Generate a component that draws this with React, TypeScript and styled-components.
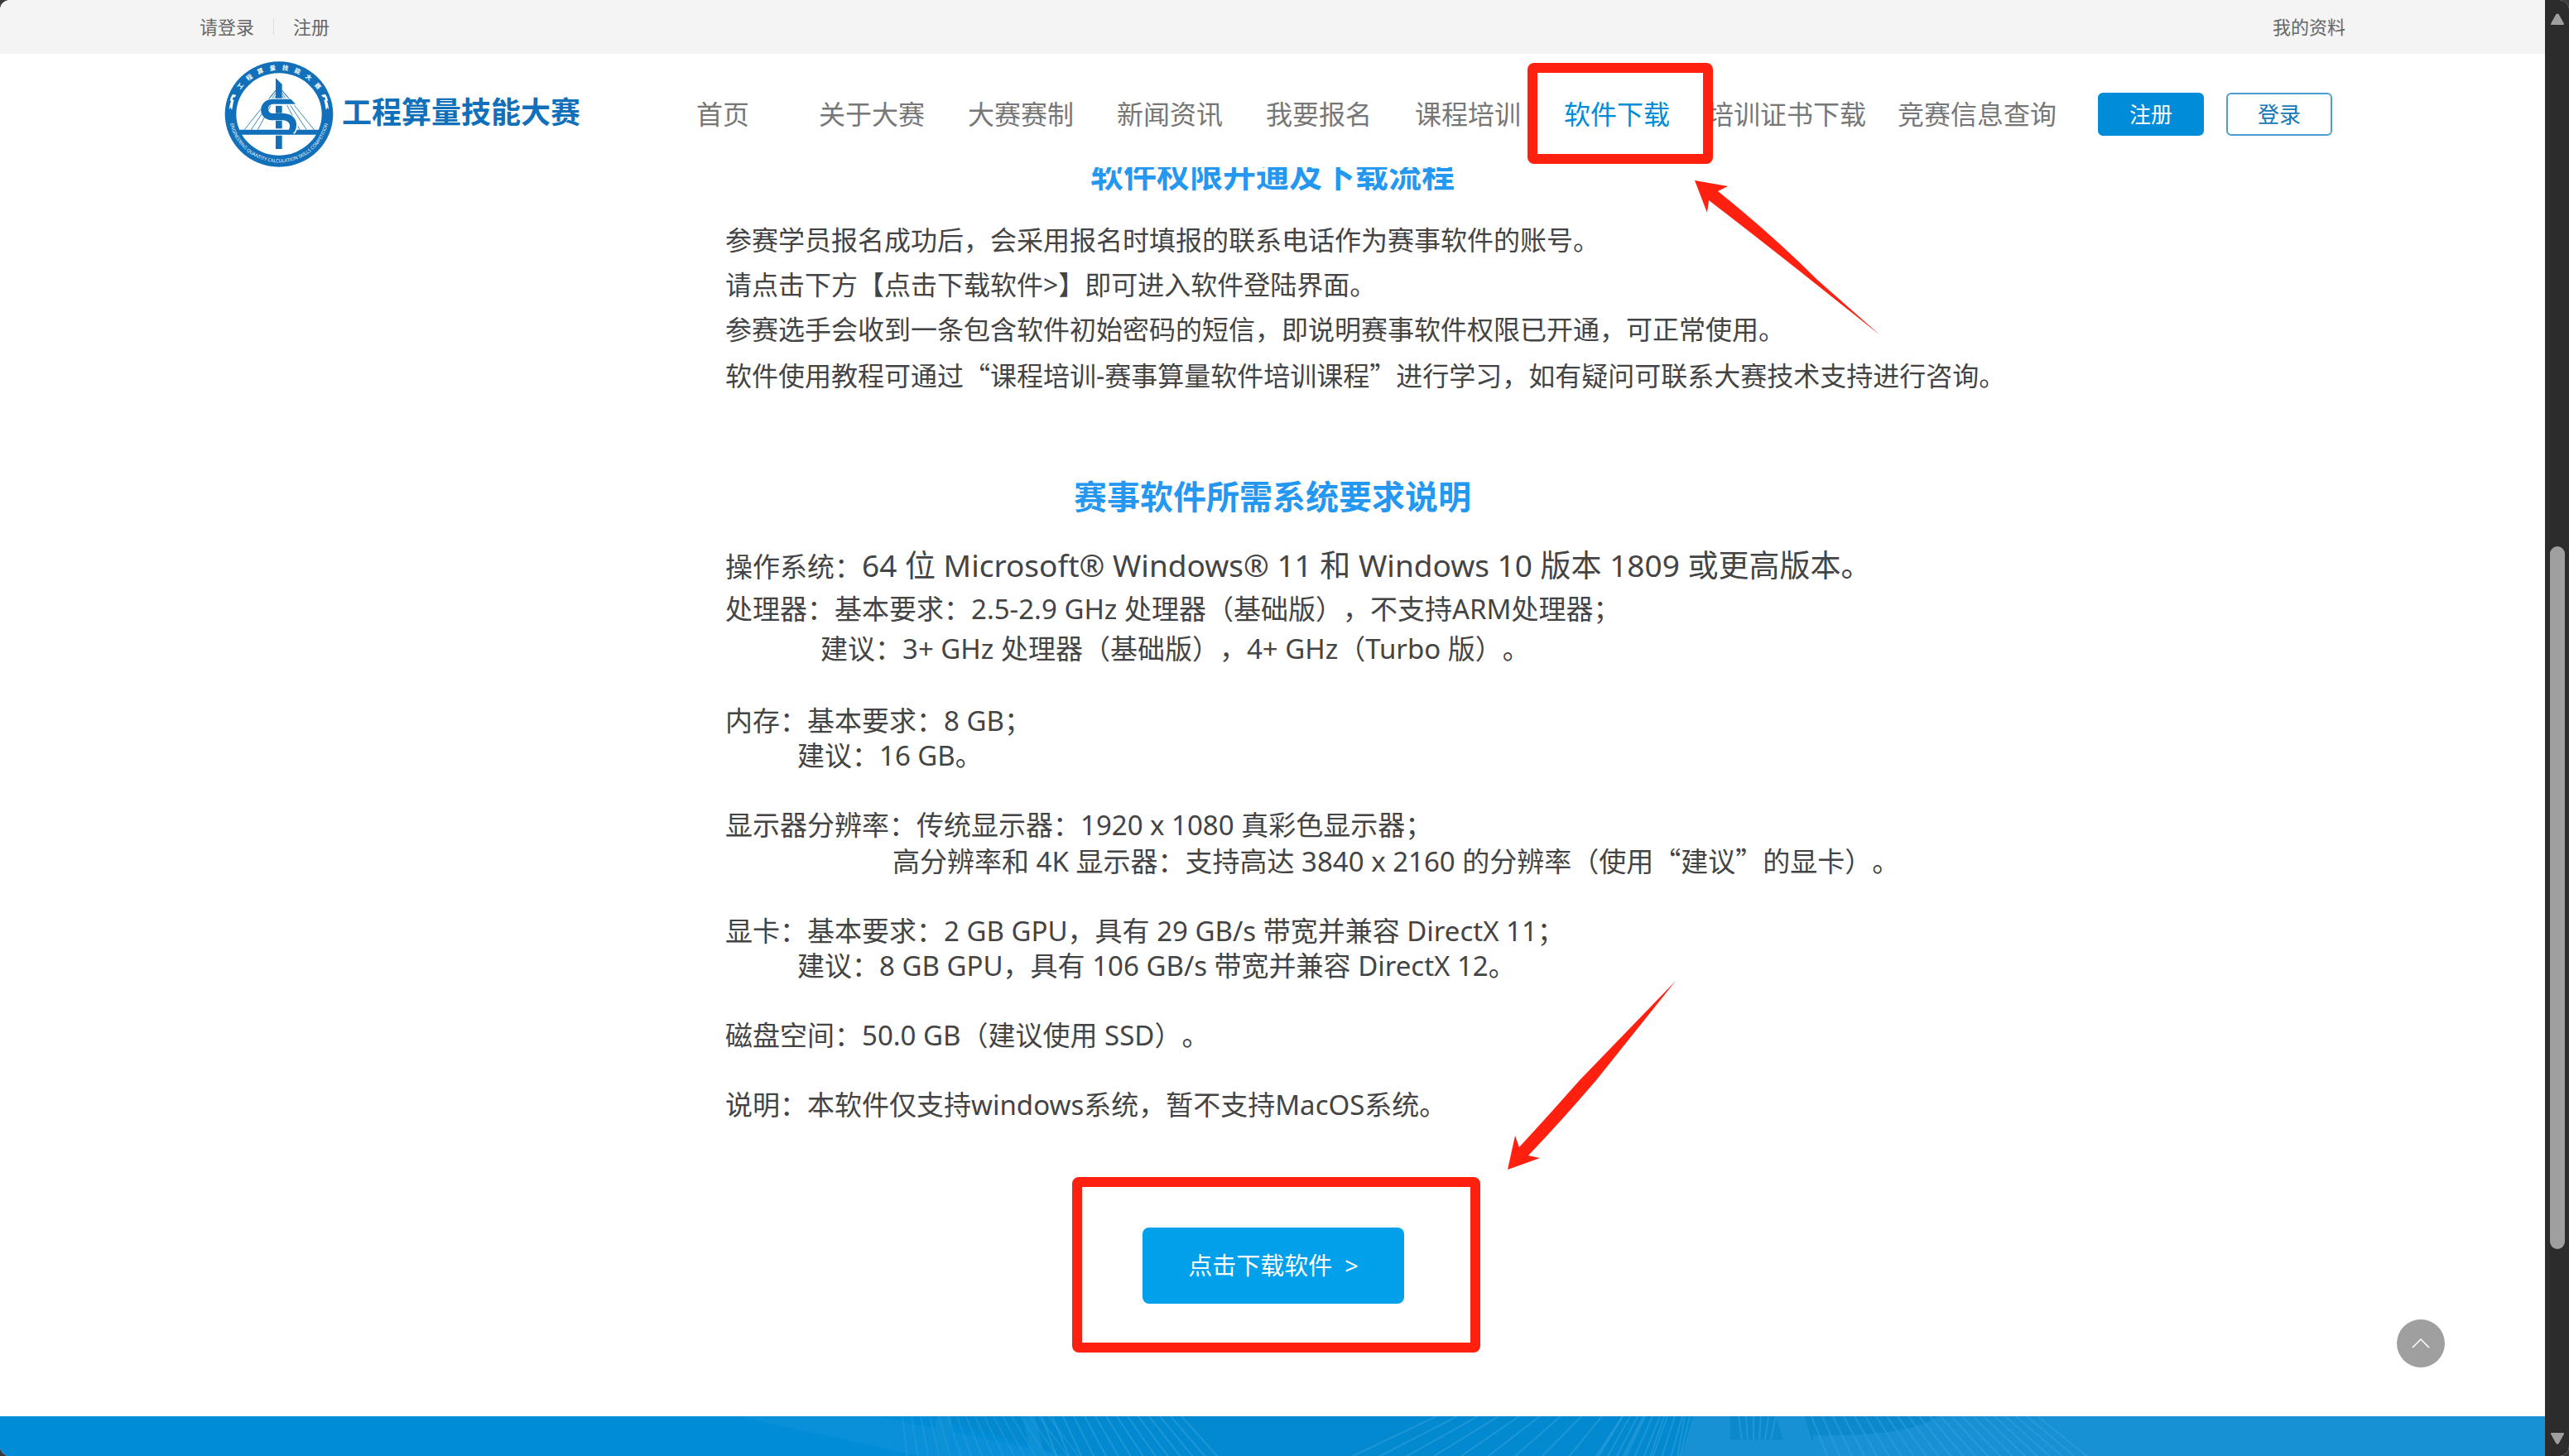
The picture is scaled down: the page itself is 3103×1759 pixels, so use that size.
import React from "react";
import styled, { createGlobalStyle } from "styled-components";

const cjk = '"Noto Sans CJK SC", sans-serif';
const red = "#ff2010";
const brand = "#1170b9";

const GlobalStyle = createGlobalStyle`
  * { box-sizing: border-box; }
  body {
    margin: 0;
    background: #3a3a3a;
    color: #444;
    font-family: "Noto Sans", ${cjk};
    font-size: 32px;
    text-spacing-trim: space-all;
  }
  h2, p, ul { margin: 0; padding: 0; }
  ul { list-style: none; }
  a { color: inherit; text-decoration: none; }
  button { font-family: inherit; cursor: pointer; }
`;

const Window = styled.div`
  display: grid;
  grid-template-columns: 1fr 29px;
  height: 100vh;
  border-radius: 12px;
  background: #fff;
  overflow: hidden;
`;

const Page = styled.div`
  display: flex;
  flex-direction: column;
  min-width: 0;
`;

const Container = styled.div`
  display: flex;
  align-items: center;
  width: 100%;
  max-width: 2592px;
  height: 100%;
  margin: 0 auto;
`;

const TopBar = styled.div`
  flex: none;
  height: 65px;
  padding-bottom: 2px;
  background: #f4f4f4;
  color: #666;
  font-size: 22px;
  line-height: 32px;
`;

const TopDivider = styled.span`
  width: 1px;
  height: 20px;
  margin: 0 23px;
  background: #ddd;
`;

const TopRight = styled.a`
  margin-left: auto;
`;

const Header = styled.header`
  position: relative;
  z-index: 2;
  flex: none;
  height: 137px;
  background: #fff;
`;

const HeaderInner = styled(Container)`
  padding: 0 16px 0 30px;
`;

const Brand = styled.a`
  display: flex;
  align-items: center;
  gap: 10px;
  height: 100%;
  padding-top: 9px;
  color: ${brand};
  font-size: 36px;
  font-weight: 700;
  line-height: 48px;
  white-space: nowrap;
`;

const BrandName = styled.span`
  padding-bottom: 4px;
`;

const Nav = styled.nav`
  height: 100%;
  margin-left: auto;
`;

const NavList = styled.ul`
  display: flex;
  height: 100%;
`;

const NavItem = styled.li<{ $active?: boolean }>`
  position: relative;
  display: flex;
  align-items: center;
  justify-content: center;
  min-width: 180px;
  padding: 0 19px;
  padding-top: 8px;
  color: ${(p) => (p.$active ? "#008cd6" : "#777")};
  z-index: ${(p) => (p.$active ? 1 : 0)};
  line-height: 48px;
  white-space: nowrap;
`;

const Actions = styled.div`
  display: flex;
  gap: 27px;
  margin-left: 31px;
  padding-top: 8px;
`;

const ActionButton = styled.button<{ $solid?: boolean }>`
  width: 128px;
  height: 52px;
  padding: 0;
  border: 2px solid ${(p) => (p.$solid ? "#008cd8" : "#4a9fd0")};
  border-radius: 6px;
  background: ${(p) => (p.$solid ? "#008cd8" : "#fff")};
  color: ${(p) => (p.$solid ? "#fff" : "#1278b8")};
  font-size: 26px;
  line-height: 36px;
`;

const Main = styled.main`
  width: 100%;
  max-width: 2592px;
  margin: -21px auto 0;
`;

const Title = styled.h2`
  color: #2498f0;
  font-size: 40px;
  font-weight: 700;
  line-height: 60px;
  text-align: center;
`;

const Intro = styled.div`
  margin: 22px 0 89px;
  padding-left: 635px;
  line-height: 54px;
  white-space: nowrap;
`;

const Specs = styled.div`
  display: flex;
  flex-direction: column;
  gap: 42px;
  margin-top: 26px;
  padding-left: 635px;
  font-size: 33px;
  white-space: nowrap;
`;

const Spec = styled.div`
  line-height: 42px;
`;

const SystemSpec = styled.div`
  line-height: 48px;
`;

const Lead = styled.p`
  line-height: 54px;
`;

const Large = styled.span`
  font-size: 37px;
`;

const Follow = styled.p<{ $indent: number }>`
  padding-left: ${(p) => p.$indent}px;
`;

const Wide = styled.span`
  font-family: ${cjk};
`;

const DownloadRow = styled.div`
  display: flex;
  justify-content: center;
  padding: 127px 0 136px 2px;
`;

const DownloadSpot = styled.div`
  position: relative;
`;

const DownloadButton = styled.button`
  display: block;
  width: 316px;
  height: 92px;
  border: 0;
  border-radius: 8px;
  background: #00a0ea;
  color: #fff;
  font-size: 29px;
  line-height: 44px;
  white-space: pre;
`;

const Marker = styled.span<{ $inset: string }>`
  position: absolute;
  inset: ${(p) => p.$inset};
  border: 12px solid ${red};
  border-radius: 8px;
  pointer-events: none;
`;

const Arrow = styled.svg<{ $left: number; $top: number }>`
  position: absolute;
  left: ${(p) => p.$left}px;
  top: ${(p) => p.$top}px;
  fill: ${red};
  pointer-events: none;
`;

const Footer = styled.footer`
  flex: 1;
  min-height: 48px;
  background: #1790d4;
  overflow: hidden;
`;

const FooterArt = styled.svg`
  display: block;
  width: 100%;
  height: 50px;
`;

const BackToTop = styled.button`
  position: fixed;
  right: 150px;
  bottom: 107px;
  z-index: 3;
  display: flex;
  align-items: center;
  justify-content: center;
  width: 58px;
  height: 58px;
  padding: 0;
  border: 0;
  border-radius: 50%;
  background: #9f9f9f;
`;

const ScrollRail = styled.aside`
  display: flex;
  flex-direction: column;
  align-items: center;
  padding: 16px 0;
  background: #2c2c2c;
`;

const ScrollTrack = styled.div`
  display: grid;
  flex: 1;
  grid-template-rows: 629fr 848fr 222fr;
`;

const ScrollThumb = styled.div`
  grid-row: 2;
  width: 18px;
  border-radius: 9px;
  background: #9f9f9f;
`;

const navItems = ["首页", "关于大赛", "大赛赛制", "新闻资讯", "我要报名", "课程培训", "软件下载", "培训证书下载", "竞赛信息查询"];

const Emblem = () => (
  <svg width="132" height="128" viewBox="35 43 396 384" aria-hidden="true">
    <defs>
      <path id="ring-top" d="M65 235 A168 161 0 0 1 401 235" />
      <path id="ring-bottom" d="M53 235 A180 175 0 0 0 413 235" />
    </defs>
    <ellipse cx="233" cy="235" rx="196" ry="191" fill={brand} />
    <ellipse cx="233" cy="235" rx="155" ry="149" fill="#fff" />
    <g stroke={brand} strokeWidth="2.5" fill="none">
      <path d="M221 148L108 291M221 158L132 291M222 168L156 291M244 148L360 291M244 158L333 291M244 168L308 291" />
      <path d="M221 150L180 200M244 150L290 200" />
    </g>
    <g fill={brand}>
      <path d="M221 104L244 126V181H221ZM221 204H244V232H221ZM221 258H244V287H221ZM221 312H244V361H221Z" />
      <path d="M84 291H382V309H84Z" />
    </g>
    <path d="M292 190H208C168 192 168 242 208 244H252C298 248 292 286 280 298" fill="none" stroke="#fff" strokeWidth="25" />
    <path d="M276 180L293 198H210C188 200 188 231 210 232H252C300 236 304 278 288 301H262C278 284 276 260 250 257H208C154 254 154 184 208 180Z" fill={brand} />
    <g fill="#fff">
      <path d="M52 218C55 204 55 196 60 186L55 186C58 176 60 168 66 162L78 166L72 174L68 172L64 182L70 184C65 196 66 208 62 220L58 210Z" />
      <path d="M414 218C411 204 411 196 406 186L411 186C408 176 406 168 400 162L386 166L393 174L398 172L402 182L396 184C401 196 400 208 404 220L408 210Z" />
    </g>
    <text fill="#fff" fontFamily={cjk} fontSize="22" fontWeight="700" textAnchor="middle">
      <textPath href="#ring-top" startOffset="50%">{"工　程　算　量　技　能　大　赛"}</textPath>
    </text>
    <text fill="#fff" fontFamily="Open Sans, sans-serif" fontSize="17" fontWeight="400" textAnchor="middle">
      <textPath href="#ring-bottom" startOffset="50%">ENGINEERING QUANTITY CALCULATION SKILLS COMPETITION</textPath>
    </text>
  </svg>
);

const range = (n: number) => Array.from({ length: n }, (_, i) => i);

const Cables = () => (
  <FooterArt viewBox="0 0 3074 48" preserveAspectRatio="none" aria-hidden="true">
    <rect width="2045" height="48" fill="#008cd6" />
    <path d="M890 0H1060L1300 48H1120Z" fill="#0a90d8" />
    <path d="M1120 0H2045V48H1300Z" fill="#0389cf" />
    <path d="M1130 0H1150L1146 48H1130ZM1235 0H1250L1262 48H1246Z" fill="#0c90d6" />
    <path d="M2045 0H2090V48H2030Z" fill="#1790d4" />
    <path d="M2090 0H2340C2320 16 2260 24 2190 22L2190 27H2090Z" fill="#0b89cc" />
    <path d="M2145 0H2180L2194 48H2160Z" fill="#1790d4" />
    <g stroke="#36a3dd" strokeWidth="2" strokeOpacity="0.5">
      {range(17).map((i) => (
        <path key={"f" + i} strokeOpacity="0.35" d={`M${1090 + i * 11} 0L${1096 + i * 13} 48`} />
      ))}
      {range(14).map((i) => (
        <path key={"a" + i} d={`M${1258 + i * 13} 0L${1277 + i * 15} 48`} />
      ))}
      {range(13).map((i) => (
        <path key={"b" + i} d={`M${1735 + i * 25} 0L${1630 + i * 33} 48`} />
      ))}
      {range(10).map((i) => (
        <path key={"c" + i} d={`M${1960 + i * 9} 0L${1930 + i * 11} 48`} />
      ))}
      {range(6).map((i) => (
        <path key={"d" + i} d={`M${2100 + i * 9} 0L${2104 + i * 7} 27`} />
      ))}
      {range(22).map((i) => (
        <path key={"e" + i} d={`M${2188 + i * 13} 0L${2208 + i * 15} 48`} />
      ))}
    </g>
  </FooterArt>
);

const Triangle = ({ down }: { down?: boolean }) => (
  <svg width="18" height="14" viewBox="0 0 18 14" aria-hidden="true">
    <path
      d={down ? "M2 1H16L10 12Q9 13 8 12Z" : "M2 13H16L10 2Q9 1 8 2Z"}
      fill="#9f9f9f"
      stroke="#9f9f9f"
      strokeWidth="2"
      strokeLinejoin="round"
    />
  </svg>
);

export default function App() {
  return (
    <Window lang="zh-CN">
      <GlobalStyle />
      <Page>
        <TopBar>
          <Container>
            <a href="#login">请登录</a>
            <TopDivider />
            <a href="#register">注册</a>
            <TopRight href="#profile">我的资料</TopRight>
          </Container>
        </TopBar>
        <Header>
          <HeaderInner>
            <Brand href="#home">
              <Emblem />
              <BrandName>工程算量技能大赛</BrandName>
            </Brand>
            <Nav>
              <NavList>
                {navItems.map((name) => {
                  const active = name === "软件下载";
                  return (
                    <NavItem key={name} $active={active}>
                      <a href={"#" + name}>{name}</a>
                      {active && (
                        <>
                          <Marker $inset="11px -26px 4px -18px" />
                          <Arrow $left={184} $top={153} width="224" height="187" viewBox="2046 218 224 187">
                            <path d="M2046 218L2086 225L2074 231Q2140 284 2194 338L2270 405L2172 327Q2110 278 2063 242L2061 257Z" />
                          </Arrow>
                        </>
                      )}
                    </NavItem>
                  );
                })}
              </NavList>
            </Nav>
            <Actions>
              <ActionButton $solid>注册</ActionButton>
              <ActionButton>登录</ActionButton>
            </Actions>
          </HeaderInner>
        </Header>

        <Main>
          <Title>软件权限开通及下载流程</Title>
          <Intro>
            <p>参赛学员报名成功后，会采用报名时填报的联系电话作为赛事软件的账号。</p>
            <p>请点击下方【点击下载软件&gt;】即可进入软件登陆界面。</p>
            <p>参赛选手会收到一条包含软件初始密码的短信，即说明赛事软件权限已开通，可正常使用。</p>
            <p>
              软件使用教程可通过<Wide>“</Wide>课程培训-赛事算量软件培训课程<Wide>”</Wide>进行学习，如有疑问可联系大赛技术支持进行咨询。
            </p>
          </Intro>
          <Title>赛事软件所需系统要求说明</Title>
          <Specs>
            <SystemSpec>
              <Lead>
                操作系统：<Large>64 位 Microsoft® Windows® 11 和 Windows 10 版本 1809 或更高版本。</Large>
              </Lead>
              <p>处理器：基本要求：2.5-2.9 GHz 处理器（基础版），不支持ARM处理器；</p>
              <Follow $indent={115}>建议：3+ GHz 处理器（基础版），4+ GHz（Turbo 版）。</Follow>
            </SystemSpec>
            <Spec>
              <p>内存：基本要求：8 GB；</p>
              <Follow $indent={87}>建议：16 GB。</Follow>
            </Spec>
            <Spec>
              <p>显示器分辨率：传统显示器：1920 x 1080 真彩色显示器；</p>
              <Follow $indent={202}>
                高分辨率和 4K 显示器：支持高达 3840 x 2160 的分辨率（使用<Wide>“</Wide>建议<Wide>”</Wide>的显卡）。
              </Follow>
            </Spec>
            <Spec>
              <p>显卡：基本要求：2 GB GPU，具有 29 GB/s 带宽并兼容 DirectX 11；</p>
              <Follow $indent={87}>建议：8 GB GPU，具有 106 GB/s 带宽并兼容 DirectX 12。</Follow>
            </Spec>
            <Spec>
              <p>磁盘空间：50.0 GB（建议使用 SSD）。</p>
            </Spec>
            <Spec>
              <p>说明：本软件仅支持windows系统，暂不支持MacOS系统。</p>
            </Spec>
          </Specs>
          <DownloadRow>
            <DownloadSpot>
              <DownloadButton>{"点击下载软件  >"}</DownloadButton>
              <Marker $inset="-61px -92px -59px -85px" />
              <Arrow $left={441} $top={-299} width="204" height="229" viewBox="1822 1183 204 229">
                <path d="M1822 1412L1831 1371L1836 1385Q1872 1346 1909 1304L2025 1184L1929 1304Q1888 1352 1847 1395L1861 1398Z" />
              </Arrow>
            </DownloadSpot>
          </DownloadRow>
        </Main>

        <Footer>
          <Cables />
        </Footer>
      </Page>
      <ScrollRail>
        <Triangle />
        <ScrollTrack>
          <ScrollThumb />
        </ScrollTrack>
        <Triangle down />
      </ScrollRail>
      <BackToTop aria-label="返回顶部">
        <svg width="22" height="14" viewBox="0 0 22 14" fill="none" stroke="#fff" strokeWidth="1.5">
          <path d="M1 12L11 2L21 12" />
        </svg>
      </BackToTop>
    </Window>
  );
}
